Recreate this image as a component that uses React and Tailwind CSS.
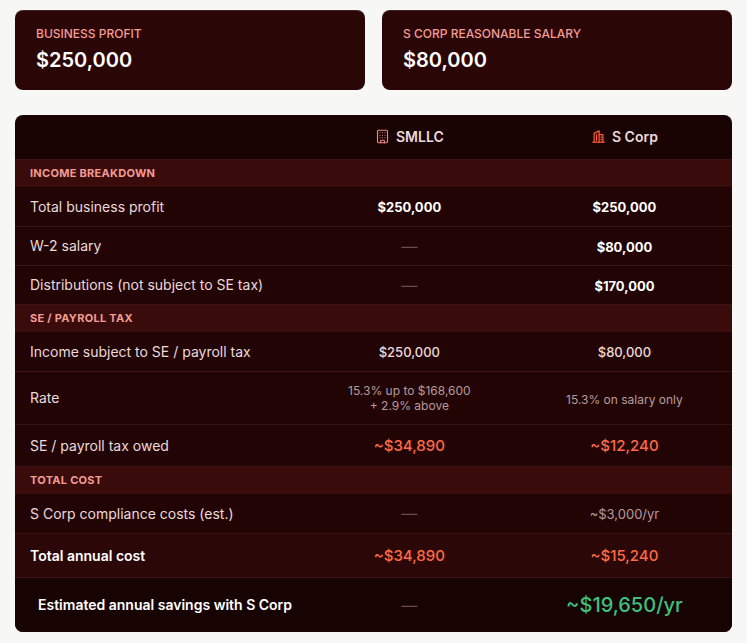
import React from 'react';
import { Building } from 'lucide-react';

const sections = [
  {
    title: 'Income breakdown',
    rows: [
      { label: 'Total business profit', a: '$250,000', b: '$250,000', kind: 'bold' },
      { label: 'W-2 salary', a: null, b: '$80,000', kind: 'bold' },
      { label: 'Distributions (not subject to SE tax)', a: null, b: '$170,000', kind: 'bold' },
    ],
  },
  {
    title: 'SE / Payroll tax',
    rows: [
      { label: 'Income subject to SE / payroll tax', a: '$250,000', b: '$80,000', kind: 'plain' },
      { label: 'Rate', a: ['15.3% up to $168,600', '+ 2.9% above'], b: '15.3% on salary only', kind: 'rate' },
      { label: 'SE / payroll tax owed', a: '~$34,890', b: '~$12,240', kind: 'orange' },
    ],
  },
  {
    title: 'Total cost',
    rows: [
      { label: 'S Corp compliance costs (est.)', a: null, b: '~$3,000/yr', kind: 'muted' },
      { label: 'Total annual cost', a: '~$34,890', b: '~$15,240', kind: 'total' },
    ],
  },
];

// two towers, drawn by hand since lucide has no close match
const Towers = ({ className }) => (
  <svg
    width="15"
    height="15"
    viewBox="0 0 24 24"
    fill="none"
    stroke="currentColor"
    strokeWidth="2"
    strokeLinecap="round"
    strokeLinejoin="round"
    className={className}
  >
    <path d="M3 21h18" />
    <path d="M5 21V7l8-4v18" />
    <path d="M13 9h6v12" />
    <path d="M9 9v9" />
    <path d="M16 13h1M16 17h1" />
  </svg>
);

const Dash = () => <span className="text-[#6e4a4a]">—</span>;

const Value = ({ v, kind }) => {
  if (v === null) return <Dash />;
  if (kind === 'rate') {
    if (Array.isArray(v)) {
      return (
        <div className="text-[12px] leading-[15px] text-[#b59c9c]">
          {v.map((line) => (
            <div key={line}>{line}</div>
          ))}
        </div>
      );
    }
    return <span className="text-[12px] text-[#b59c9c]">{v}</span>;
  }
  if (kind === 'orange' || kind === 'total') {
    return <span className="text-[15px] font-medium text-[#ff6a45]">{v}</span>;
  }
  if (kind === 'muted') return <span className="text-[13px] text-[#b59c9c]">{v}</span>;
  if (kind === 'plain') return <span className="text-[13px] font-medium text-[#eadada]">{v}</span>;
  return <span className="text-[13px] font-bold text-white">{v}</span>;
};

const rowHeight = {
  bold: 'h-[39px]',
  plain: 'h-[39px]',
  muted: 'h-[39px]',
  rate: 'h-[53px]',
  orange: 'h-[42px]',
  total: 'h-[44px]',
};

const StatCard = ({ label, value }) => (
  <div className="flex-1 rounded-lg bg-[#2a0606] px-[21px] pt-[16px] pb-[16px] shadow-[inset_0_1px_0_rgba(255,255,255,0.12)]">
    <div className="text-[12px] font-medium uppercase text-[#f39c94] leading-4">{label}</div>
    <div className="mt-[4px] text-[20px] font-semibold text-white leading-7">{value}</div>
  </div>
);

export default function App() {
  return (
    <div
      className="min-h-[643px] bg-[#f7f7f5] px-[15px] pt-[10px]"
      style={{ fontFamily: 'Inter, "Noto Sans", sans-serif' }}
    >
      <div className="flex gap-[17px]">
        <StatCard label="Business profit" value="$250,000" />
        <StatCard label="S Corp reasonable salary" value="$80,000" />
      </div>

      <div className="mt-[25px] overflow-hidden rounded-lg bg-[#1a0303]">
        <table className="w-full table-fixed border-collapse">
          <colgroup>
            <col className="w-[40%]" />
            <col className="w-[30%]" />
            <col className="w-[30%]" />
          </colgroup>
          <thead>
            <tr className="h-[44px] border-b border-[#3a1414]">
              <th />
              <th>
                <div className="flex items-center justify-center gap-[6px] text-[14px] font-semibold text-[#eadada]">
                  <Building size={15} strokeWidth={1.8} className="text-[#f08a84]" />
                  SMLLC
                </div>
              </th>
              <th>
                <div className="flex items-center justify-center gap-[6px] text-[14px] font-semibold text-[#eadada]">
                  <Towers className="text-[#ff5b3a]" />
                  S Corp
                </div>
              </th>
            </tr>
          </thead>
          <tbody>
            {sections.map((section) => (
              <React.Fragment key={section.title}>
                <tr className="h-[28px] bg-[#3a0b0b]">
                  <td colSpan={3} className="px-[15px] text-[11px] font-bold uppercase tracking-wide text-[#f39c94]">
                    {section.title}
                  </td>
                </tr>
                {section.rows.map((row) => (
                  <tr
                    key={row.label}
                    className={`${rowHeight[row.kind]} border-b border-[#3a1414] ${
                      row.kind === 'total' ? 'bg-[#2c0707]' : 'bg-[#220404]'
                    }`}
                  >
                    <td
                      className={`px-[15px] text-[14px] ${
                        row.kind === 'total' ? 'font-semibold text-white' : 'text-[#eadada]'
                      }`}
                    >
                      {row.label}
                    </td>
                    <td className="text-center">
                      <Value v={row.a} kind={row.kind} />
                    </td>
                    <td className="text-center">
                      <Value v={row.b} kind={row.kind} />
                    </td>
                  </tr>
                ))}
              </React.Fragment>
            ))}
            <tr className="h-[55px] bg-[#180303]">
              <td className="whitespace-nowrap pl-[23px] text-[14px] font-semibold text-white">
                Estimated annual savings with S Corp
              </td>
              <td className="text-center">
                <Dash />
              </td>
              <td className="text-center text-[20px] font-medium text-[#3ec07e]">~$19,650/yr</td>
            </tr>
          </tbody>
        </table>
      </div>
    </div>
  );
}
